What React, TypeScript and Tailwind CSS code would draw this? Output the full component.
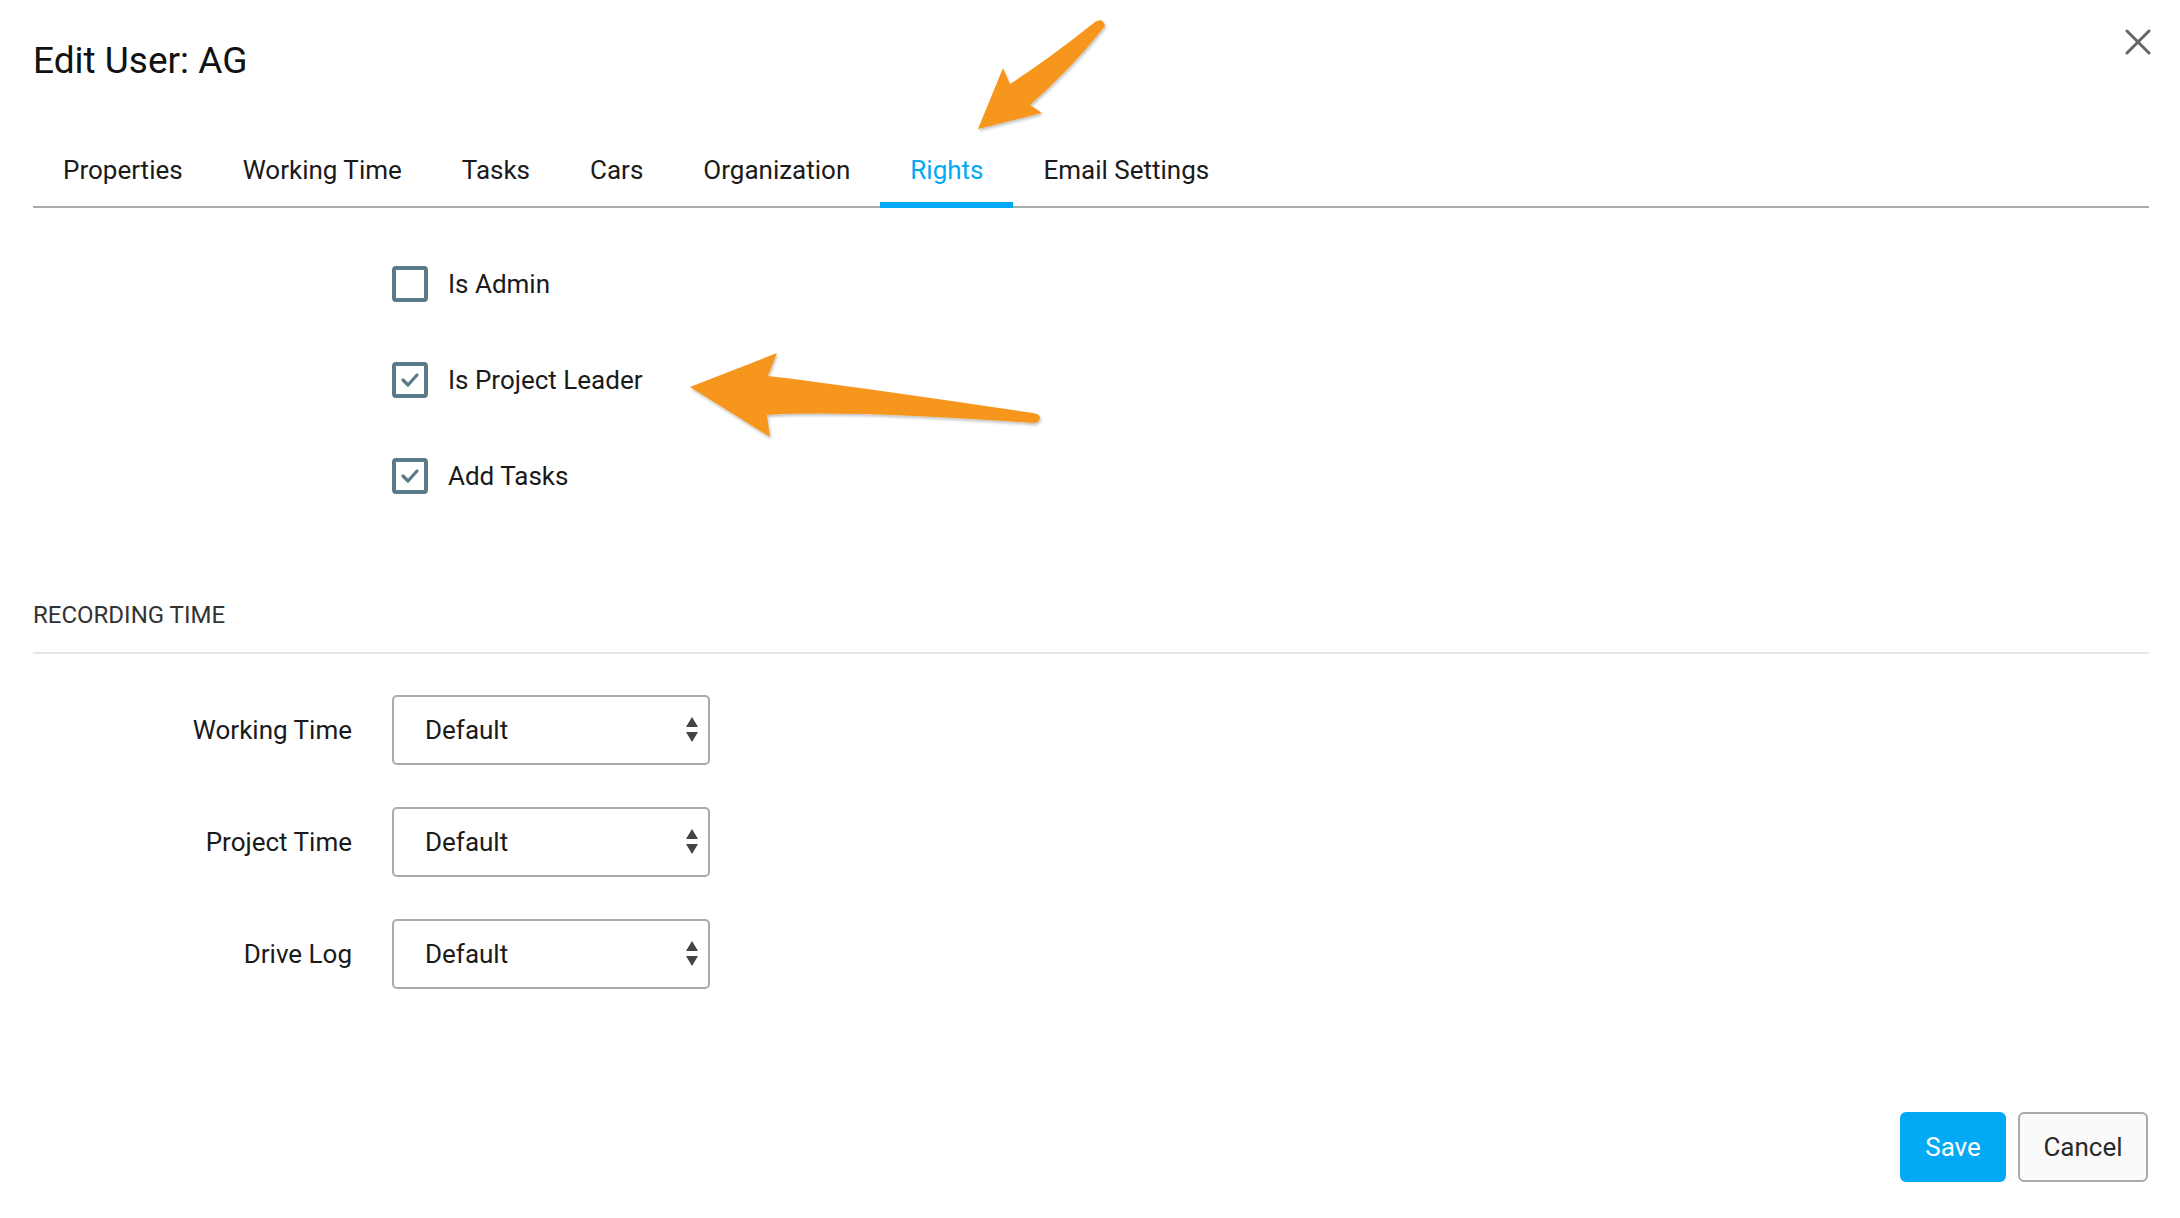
import React from 'react';

const TABS = ['Properties', 'Working Time', 'Tasks', 'Cars', 'Organization', 'Rights', 'Email Settings'];

const RIGHTS = [
  { label: 'Is Admin', checked: false },
  { label: 'Is Project Leader', checked: true },
  { label: 'Add Tasks', checked: true },
];

const RECORDING = ['Working Time', 'Project Time', 'Drive Log'];

function Checkbox({ checked }: { checked: boolean }) {
  return (
    <div className="w-[36px] h-[36px] rounded-[4px] border-[4px] border-[#5a7a8a] flex items-center justify-center">
      {checked && (
        <svg width="20" height="16" viewBox="0 0 20 16">
          <polyline points="3,8 8,13 17,3" fill="none" stroke="#5a7a8a" strokeWidth="3.2" strokeLinecap="round" strokeLinejoin="round" />
        </svg>
      )}
    </div>
  );
}

function SelectBox() {
  return (
    <div className="w-[318px] h-[70px] border-2 border-[#ababab] rounded-[5px] flex items-center justify-between pl-[31px] pr-[9px]">
      <span className="text-[26px] text-[#1a1a1a]">Default</span>
      <svg width="14" height="28" viewBox="0 0 14 28">
        <polygon points="7,1 13,11 1,11" fill="#444" />
        <polygon points="1,16 13,16 7,26" fill="#444" />
      </svg>
    </div>
  );
}

export default function App() {
  return (
    <div
      className="relative w-[2180px] h-[1218px] bg-white overflow-hidden pt-[39px] pl-[33px] pr-[31px]"
      style={{ fontFamily: 'Roboto, "Liberation Sans", sans-serif' }}
    >
      {/* Header */}
      <div className="flex items-center justify-between h-[44px]">
        <h1 className="text-[37px] leading-[44px] text-[#111]">Edit User: AG</h1>
        <svg width="26" height="26" viewBox="0 0 26 26" className="-mt-[39px] mr-[-2px]">
          <line x1="2" y1="2" x2="24" y2="24" stroke="#666" strokeWidth="3" strokeLinecap="round" />
          <line x1="24" y1="2" x2="2" y2="24" stroke="#666" strokeWidth="3" strokeLinecap="round" />
        </svg>
      </div>

      {/* Tabs */}
      <div className="mt-[72px] flex border-b-2 border-[#aaaaaa]">
        {TABS.map((t) => (
          <div
            key={t}
            className={`px-[30px] pb-[17px] -mb-[2px] text-[26px] leading-[30px] border-b-[6px] ${
              t === 'Rights' ? 'border-[#03a9f4] text-[#03a9f4]' : 'border-transparent text-[#1a1a1a]'
            }`}
          >
            {t}
          </div>
        ))}
      </div>

      {/* Rights */}
      <div className="mt-[58px] pl-[359px] flex flex-col gap-[60px]">
        {RIGHTS.map((r) => (
          <div key={r.label} className="flex items-center gap-[20px] h-[36px]">
            <Checkbox checked={r.checked} />
            <span className="text-[26px] text-[#1a1a1a]">{r.label}</span>
          </div>
        ))}
      </div>

      {/* Recording time */}
      <div className="mt-[107px] border-b-2 border-[#e4e4e4] pb-[23px]">
        <h2 className="text-[24px] leading-[28px] text-[#333]">RECORDING TIME</h2>
      </div>

      <div className="mt-[41px] flex flex-col gap-[42px]">
        {RECORDING.map((l) => (
          <div key={l} className="flex items-center gap-[40px]">
            <div className="w-[319px] text-right text-[26px] text-[#1a1a1a]">{l}</div>
            <SelectBox />
          </div>
        ))}
      </div>

      {/* Footer */}
      <div className="mt-[123px] flex justify-end gap-[12px] pr-[1px]">
        <button className="w-[106px] h-[70px] rounded-[6px] bg-[#03a9f4] text-white text-[26px]">Save</button>
        <button className="w-[130px] h-[70px] rounded-[6px] bg-[#fafafa] border-2 border-[#aaaaaa] text-[#2a2a2a] text-[26px]">
          Cancel
        </button>
      </div>

      {/* Annotation arrows */}
      <svg className="absolute inset-0 pointer-events-none" width="2180" height="1218" viewBox="0 0 2180 1218">
        <defs>
          <filter id="sh" x="-10%" y="-10%" width="120%" height="130%">
            <feDropShadow dx="1" dy="2" stdDeviation="1.5" floodColor="#000" floodOpacity="0.25" />
          </filter>
        </defs>
        <path
          d="M 978 129 L 1003 68 L 1010 84 Q 1050 58 1095 22 Q 1103 17 1105 26 Q 1072 68 1030 105 L 1042 113 Z"
          fill="#f7961e"
          filter="url(#sh)"
        />
        <path
          d="M 690 387 L 777 353 L 768 376 Q 830 383 1033 413 Q 1040 414 1040 418 Q 1039 423 1033 423 Q 850 410 767 415 L 770 437 Z"
          fill="#f7961e"
          filter="url(#sh)"
        />
      </svg>
    </div>
  );
}
